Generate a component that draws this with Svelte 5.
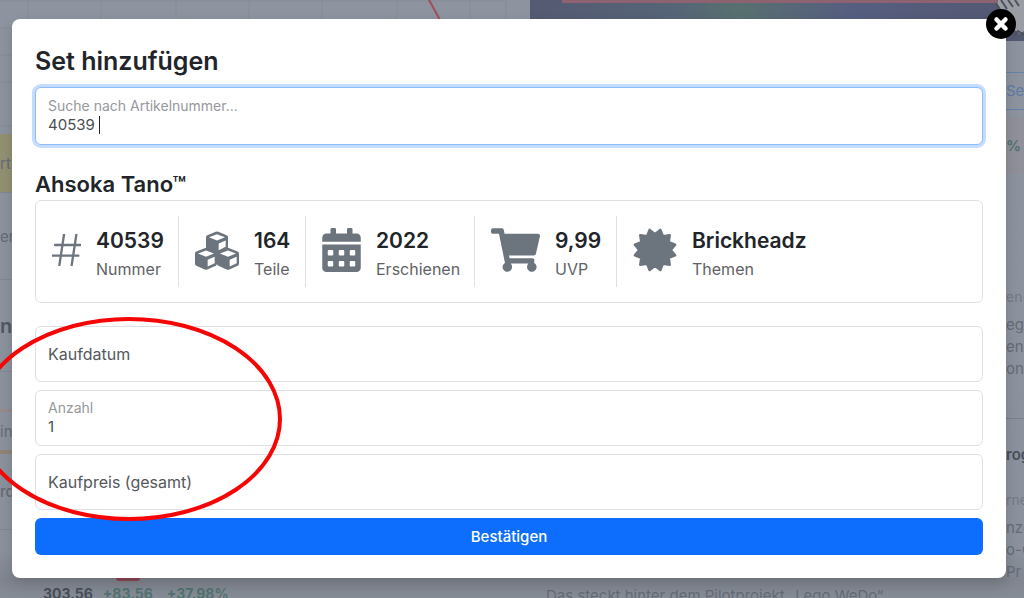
<script>
  let articleNumber = $state('40539');
  let amount = $state('1');
  let date = $state('');
  let price = $state('');

  const stats = [
    { icon: 'hash', value: '40539', label: 'Nummer' },
    { icon: 'cubes', value: '164', label: 'Teile' },
    { icon: 'calendar', value: '2022', label: 'Erschienen' },
    { icon: 'cart', value: '9,99', label: 'UVP' },
    { icon: 'badge', value: 'Brickheadz', label: 'Themen' }
  ];

  const badgePoints = Array.from({ length: 24 }, (_, i) => {
    const radius = i % 2 ? 15.8 : 20.8;
    const angle = ((i * 15 + 15) * Math.PI) / 180;
    return `${(22 + radius * Math.sin(angle)).toFixed(2)},${(22 - radius * Math.cos(angle)).toFixed(2)}`;
  }).join(' ');
</script>

{#snippet cube(x, y)}
  <g transform="translate({x} {y})">
    <path fill="currentColor" d="M29 1Q33-1 37 1L62 11Q66 13 66 17V48Q66 52 62 54L37 65Q33 67 29 65L4 54Q0 52 0 48V17Q0 13 4 11Z" />
    <path fill="#fff" d="M33 8L57 17L33 27L9 17ZM38 36L59 27V46L38 56Z" />
  </g>
{/snippet}

<div class="page">
  <div class="backdrop" aria-hidden="true">
    <div class="left">
      <svg class="chart" viewBox="0 0 530 134" preserveAspectRatio="none">
        <path d="M0 1H506M28 0V134M101 0V134M176 0V134M249 0V134M322 0V134M397 0V134M470 0V134M506 0V134M0 28H506M0 55H506M0 82H506M0 126H506" stroke="#848b96" fill="none" />
        <path d="M428-2L440 20" stroke="#a04c5c" stroke-width="2" fill="none" />
      </svg>
      <div class="row yellow">rt</div>
      <div class="row users">er</div>
      <div class="row big">n</div>
      <div class="row empty"></div>
      <div class="row tab">in</div>
      <div class="row word">rd</div>
      <div class="totals">
        <span class="marker"></span>
        <b>303.56</b><b class="green">+83.56</b><b class="green percent">+37.98%</b>
      </div>
    </div>
    <div class="right">
      <div class="hero">
        <svg viewBox="0 0 42 42" width="42" height="42">
          <path d="M13 0L18 12L24 24L38 34L42 31V0Z" fill="#9a9ea4" />
          <path d="M12 0L21 14M19 0L25 9M26 0L31 7M33 0L37 6M32 36L36 31L42 35" stroke="#4c515c" stroke-width="2" fill="none" />
        </svg>
      </div>
      <div class="side">
        <p class="search">Se</p>
        <p class="change">%</p>
        <p class="dim">en-</p>
        <p>ego</p>
        <p>en</p>
        <p class="last">on</p>
        <p class="strong">rog</p>
        <p class="dim">rne</p>
        <p>nze</p>
        <p>o-C</p>
        <p>Pr</p>
      </div>
      <p class="news">Das steckt hinter dem Pilotprojekt „Lego WeDo“.</p>
    </div>
  </div>

  <div class="modal" role="dialog" aria-labelledby="dialog-title">
    <button class="close" type="button" aria-label="Schließen">
      <svg viewBox="0 0 16 16" width="16" height="16"><path d="M3.500 3.500L12.500 12.500M12.500 3.500L3.500 12.500" stroke="#fff" stroke-width="4.500" stroke-linecap="round" /></svg>
    </button>
    <h1 id="dialog-title">Set hinzufügen</h1>
    <div class="field active">
      <label for="article">Suche nach Artikelnummer...</label>
      <div class="entry"><input id="article" type="text" bind:value={articleNumber} /><span class="caret"></span></div>
    </div>

    <h2>Ahsoka Tano™</h2>
    <div class="stats">
      {#each stats as stat}
        <div class="stat">
          {#if stat.icon === 'hash'}
            <svg viewBox="0 0 87 96" width="29" height="32"><path d="M36 2L22 94M73 2L59 94M9 33H85M2 65H79" fill="none" stroke="currentColor" stroke-width="7" stroke-linecap="round" /></svg>
          {:else if stat.icon === 'cubes'}
            <svg viewBox="0 0 132 116" width="44" height="39">{@render cube(33, 1)}{@render cube(0, 50)}{@render cube(66, 50)}</svg>
          {:else if stat.icon === 'calendar'}
            <svg viewBox="0 0 448 512" width="39" height="44">
              <path fill="currentColor" d="M0 192H448V464a48 48 0 0 1-48 48H48a48 48 0 0 1-48-48ZM48 64H96V16a16 16 0 0 1 16-16h32a16 16 0 0 1 16 16V64H288V16a16 16 0 0 1 16-16h32a16 16 0 0 1 16 16V64h48a48 48 0 0 1 48 48v48H0v-48a48 48 0 0 1 48-48Z" />
              {#each [64, 192, 320] as x}
                {#each [256, 384] as y}<rect {x} {y} width="64" height="64" rx="12" fill="#fff" />{/each}
              {/each}
            </svg>
          {:else if stat.icon === 'cart'}
            <svg viewBox="0 0 576 512" width="49" height="44"><path fill="currentColor" d="M528.12 301.319l47.273-208C578.806 78.301 567.391 64 551.99 64H159.208l-9.166-44.81C147.758 8.021 137.93 0 126.529 0H24C10.745 0 0 10.745 0 24v16c0 13.255 10.745 24 24 24h69.883l70.248 343.435C147.325 417.1 136 435.222 136 456c0 30.928 25.072 56 56 56s56-25.072 56-56c0-15.674-6.447-29.835-16.824-40h209.647C430.447 426.165 424 440.326 424 456c0 30.928 25.072 56 56 56s56-25.072 56-56c0-22.172-12.888-41.332-31.579-50.405l5.517-24.276c3.413-15.018-8.002-29.319-23.403-29.319H218.117l-6.545-32h293.145c11.206 0 20.92-7.754 23.403-18.681z" /></svg>
          {:else}
            <svg viewBox="0 0 44 44" width="44" height="44"><polygon points={badgePoints} fill="currentColor" stroke="currentColor" stroke-width="2.500" stroke-linejoin="round" /></svg>
          {/if}
          <div class="figures"><strong>{stat.value}</strong><span>{stat.label}</span></div>
        </div>
      {/each}
    </div>

    <form onsubmit={(event) => event.preventDefault()}>
      <div class="field resting">
        <label for="date">Kaufdatum</label>
        <input id="date" type="text" bind:value={date} />
      </div>
      <div class="field">
        <label for="amount">Anzahl</label>
        <input id="amount" type="text" inputmode="numeric" bind:value={amount} />
      </div>
      <div class="field resting">
        <label for="price">Kaufpreis (gesamt)</label>
        <input id="price" type="text" bind:value={price} />
      </div>
      <button class="submit" type="submit">Bestätigen</button>
    </form>
  </div>

  <svg class="ring" viewBox="0 0 308 206" width="308" height="206" aria-hidden="true">
    <ellipse cx="154" cy="103" rx="151" ry="100" fill="none" stroke="#f60505" stroke-width="4" />
  </svg>
</div>

<style>
  :global(body) {
    margin: 0;
    font-family: Inter, "Open Sans", sans-serif;
    color: #212529;
  }
  .page {
    position: relative;
    box-sizing: border-box;
    min-height: 100vh;
    padding: 19px 18px 20px 12px;
    overflow: hidden;
    background: #8e949e;
  }
  p, h1, h2 { margin: 0; }

  .backdrop {
    position: absolute;
    inset: 0;
    display: grid;
    grid-template-columns: 530fr 494fr;
    overflow: hidden;
    font-size: 15px;
    color: #656b76;
    background: linear-gradient(#8d949f, #8c929d 92%, #80858f 97%, #868c96);
  }
  .left, .right {
    display: flex;
    flex-direction: column;
    min-width: 0;
  }
  .chart { width: 100%; height: 134px; flex: none; }
  .row {
    display: flex;
    align-items: center;
    box-sizing: border-box;
    width: 14px;
    flex: none;
  }
  .yellow { height: 58px; background: #929174; }
  .users { height: 88px; border-top: 1px solid #828893; border-bottom: 1px solid #828893; }
  .big { height: 92px; font-size: 20px; font-weight: 600; color: #515762; border-bottom: 1px solid #828893; }
  .empty { height: 40px; border-bottom: 3px solid #97898c; }
  .tab { height: 42px; border-bottom: 4px solid #918477; }
  .word { height: 76px; border-bottom: 1px solid #828893; font-weight: 500; }
  .totals {
    position: relative;
    display: flex;
    align-items: end;
    gap: 10px;
    flex: 1;
    margin-bottom: -3px;
    padding-left: 43px;
    font-size: 14px;
    line-height: 14px;
    color: #484e59;
  }
  .green { color: #50736f; }
  .percent { margin-left: 4px; }
  .marker {
    position: absolute;
    bottom: 20px;
    left: 116px;
    width: 24px;
    height: 6px;
    border-radius: 4px;
    background: #8d4656;
  }
  .hero {
    position: relative;
    display: flex;
    justify-content: flex-end;
    height: 41px;
    flex: none;
    overflow: hidden;
    background: linear-gradient(90deg, #545a72, #566577 30%, #58706f 42%, #565e80 65%, #535871);
  }
  .hero::before {
    content: "";
    position: absolute;
    top: 0;
    left: 32px;
    right: 26px;
    height: 3px;
    background: #8d6371;
  }
  .side {
    align-self: flex-end;
    width: 18px;
    margin-bottom: auto;
    white-space: nowrap;
    line-height: 22px;
  }
  .search {
    margin-top: 31px;
    padding: 7px 0;
    color: #6078a5;
    border-top: 1px solid #6681ad;
    border-bottom: 1px solid #6681ad;
  }
  .change {
    margin: 8px 0 109px;
    padding: 17px 0;
    font-weight: 600;
    color: #50736f;
    background: #8f9099;
  }
  .dim { margin-bottom: 3px; font-size: 14px; line-height: 28px; color: #747a85; }
  .last { padding-bottom: 38px; margin-bottom: 8px; border-bottom: 1px solid #7b818c; }
  .strong { padding: 17px 0 20px; font-weight: 600; color: #484e59; }
  .news {
    padding-left: 16px;
    margin-bottom: -7px;
    line-height: 18px;
  }

  .modal {
    position: relative;
    box-sizing: border-box;
    padding: 24px 23px 23px;
    border-radius: 8px;
    background: #fff;
    box-shadow: 0 6px 14px rgba(0, 0, 0, 0.16);
  }
  .close {
    position: absolute;
    top: -10px;
    right: -10px;
    display: grid;
    place-items: center;
    width: 30px;
    height: 30px;
    padding: 0;
    border: 0;
    border-radius: 50%;
    background: #000;
  }
  h1 {
    margin-bottom: 8px;
    font-size: 25px;
    line-height: 36px;
    font-weight: 600;
  }
  h2 {
    margin: 27px 0 4px;
    font-size: 22px;
    line-height: 24px;
    font-weight: 600;
  }
  .field {
    display: flex;
    flex-direction: column;
    justify-content: center;
    box-sizing: border-box;
    height: 56px;
    padding: 0 12px;
    border: 1px solid #dee0e3;
    border-radius: 6px;
    color: #4a4d51;
    background: #fff;
  }
  .field label {
    font-size: 14px;
    line-height: 18px;
    color: #96999c;
  }
  .field input {
    width: 100%;
    box-sizing: border-box;
    padding: 0;
    border: 0;
    outline: 0;
    background: transparent;
    font: 15px/20px Inter, "Open Sans", sans-serif;
    color: #4a4d51;
  }
  .field.active {
    height: 58px;
    border-color: #8fbdfa;
    box-shadow: 0 0 0 3px #c4dcfe;
  }
  .entry { display: flex; align-items: center; gap: 4px; }
  .entry input { width: auto; field-sizing: content; }
  .caret { width: 1px; height: 18px; background: #212529; }
  .field.resting {
    display: grid;
    grid-template-columns: minmax(0, 1fr);
    align-content: center;
  }
  .field.resting label, .field.resting input { grid-area: 1 / 1; }
  .field.resting label { font-size: 16px; line-height: 20px; color: #54575b; }

  .stats {
    display: grid;
    grid-template-columns: 143px 127px 169px 142px 1fr;
    padding: 15px 0;
    border: 1px solid #dee0e3;
    border-radius: 6px;
  }
  .stat {
    display: flex;
    align-items: center;
    gap: 15px;
    height: 71px;
    padding-left: 16px;
    border-right: 1px solid #dee0e3;
    color: #6c757d;
  }
  .stat:last-child { border-right: 0; }
  .stat svg { flex: none; margin-bottom: 3px; }
  .figures { display: flex; flex-direction: column; padding-top: 6px; white-space: nowrap; }
  .figures strong { font-size: 21px; line-height: 28px; font-weight: 600; color: #212529; }
  .figures span { font-size: 16px; line-height: 28px; color: #5f6265; }

  form { display: grid; gap: 8px; margin-top: 23px; }
  .submit {
    height: 37px;
    padding: 0;
    border: 0;
    border-radius: 6px;
    background: #0d6efd;
    color: #fff;
    font: 500 15px/22px Inter, "Open Sans", sans-serif;
  }
  .ring { position: absolute; top: 316px; left: -25px; pointer-events: none; }
</style>
